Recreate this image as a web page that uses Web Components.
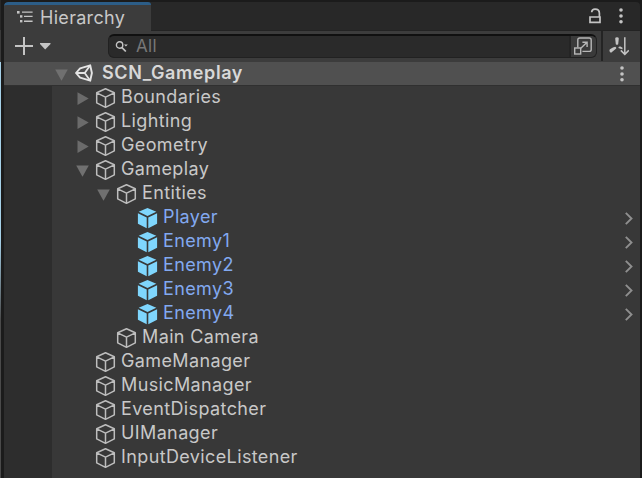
<!DOCTYPE html>
<html lang="en">
<head>
<meta charset="utf-8">
<title>Hierarchy</title>
<style>
html,body{margin:0;width:642px;height:478px;overflow:hidden;background:#1a1a1a}
</style>
</head>
<body>
<hierarchy-panel></hierarchy-panel>
<script>
const define = (name, html, setup) => {
  const t = document.createElement('template');
  t.innerHTML = html;
  customElements.define(name, class extends HTMLElement {
    connectedCallback() {
      if (this.shadowRoot) return;
      const root = this.attachShadow({mode: 'open'});
      root.append(t.content.cloneNode(true));
      if (setup) setup(this, root);
    }
  });
};

const ICONS = {
  list: [16, 14, '<g fill="#c4c4c4"><rect x="0" y="1" width="2.6" height="2.6"/><rect x="3" y="5.2" width="2.4" height="2.4"/><rect x="3" y="10" width="2.4" height="2.4"/><path d="M5 1.5h10.6v1.3H5zM7 5.8h8.6v1.3H7zM7 10.6h8.6v1.3H7z"/></g>'],
  plus: [18, 18, '<path d="M9 0v18M0 9h18" stroke="#c4c4c4" stroke-width="2"/>'],
  drop: [11, 7, '<path d="M0 0h10.5v1L5.2 6.6 0 1z" fill="#c4c4c4"/>'],
  search: [14, 12, '<circle cx="4.6" cy="4" r="3.2" fill="none" stroke="#c4c4c4" stroke-width="1.4"/><path d="M6.8 6.3l4 4.2" stroke="#c4c4c4" stroke-width="1.7"/><path d="M9 3.6h3.8L10.9 5.6z" fill="#c4c4c4"/>'],
  open: [18, 18, '<path d="M3.8 10.5V3q0-2 2-2h9.4q2 0 2 2v9.4q0 2-2 2H8.4M6.8 11.2l6-5.8M8.4 5.2h4.7v4.7" fill="none" stroke="#b8b8b8" stroke-width="1.4"/><rect x=".7" y="11" width="6" height="6" fill="none" stroke="#b8b8b8" stroke-width="1.4"/>'],
  lock: [12, 16, '<path d="M2.7 4.2V4Q3 1.1 6 1.1q4.4 0 4.4 4.2V9M1 9v5.4h10V9z" fill="none" stroke="#c4c4c4" stroke-width="1.7"/>'],
  dots: [4, 16, '<g fill="#c4c4c4"><circle cx="2" cy="2" r="1.8"/><circle cx="2" cy="8" r="1.8"/><circle cx="2" cy="13.8" r="1.8"/></g>'],
  fan: [20, 19, '<g fill="#c4c4c4"><path d="M6.2 1.5Q6.3.2 8 .2T9.8 1.5L9.2 7.3Q8 8.4 6.8 7.3zM.4 12.9Q1.1 11.4 6.2 9.7q1.5.3 1 1.9L2.1 15.7Q.4 15.4.4 12.9zM9.3 11q.4-1.8 2.2-1.4l2 1.2v1.5l-2-.5z"/></g><path d="M15.8.2v16.8M11.8 13.4l4 4 4-4" fill="none" stroke="#c4c4c4" stroke-width="1.5"/>'],
  unity: [18, 18, '<path d="M5.1 4.3L15.2 1.3l1.7 7.7-1.7 7.7-10.1-3L1 9z" fill="none" stroke="#e5e5e5" stroke-width="1.9" stroke-linejoin="round"/><path d="M1.5 9h8.2l5-7M9.7 9l5 7" fill="none" stroke="#e5e5e5" stroke-width="1.8"/>'],
  down: [13, 12, '<path d="M.2.4h12.6L6.5 11.8z" fill="#707070"/>'],
  right: [12, 13, '<path d="M.5.3v12.6L11.7 6.6z" fill="#6b6b6b"/>'],
  cube: [21, 22, '<path d="M10.5 1.8l8.8 4v10l-8.8 4.5-8.8-4.5v-10zM1.7 5.8l8.8 4.4 8.8-4.4M10.5 10.2v10.1" fill="none" stroke="#bdbdbd" stroke-width="1.5" stroke-linejoin="round"/>'],
  prefab: [21, 22, '<g fill="#7fd6fd"><path d="M10.5.9l8.8 3.9-8.8 4.1-8.8-4.1z"/><path d="M.9 6.3l8.8 4.1v10.8L.9 16.7zM20.1 6.3l-8.8 4.1v10.8l8.8-4.5z"/></g>'],
  chevron: [8, 13, '<path d="M.8.8l5.7 5.7-5.7 5.7" fill="none" stroke="#8f8f8f" stroke-width="1.9"/>']
};

define('ui-icon', '<style>:host{display:block;flex:none;line-height:0}svg{display:block}</style>', (el, root) => {
  const [w, h, body] = ICONS[el.getAttribute('name')];
  root.innerHTML += `<svg width="${w}" height="${h}" viewBox="0 0 ${w} ${h}">${body}</svg>`;
});

define('tab-bar', `<style>
:host{display:flex;height:29px;background:#282828;border-radius:4px 4px 0 0;overflow:hidden}
.tab{box-sizing:border-box;width:147px;border-top:3px solid #2c5d87;border-radius:4px 3px 0 0;background:#3c3c3c;display:flex;padding-left:13px;gap:7px}
.tab ui-icon{margin-top:5px}
.title{font-size:18px;letter-spacing:.3px;line-height:25px;color:#c8c8c8}
.rest{flex:1;border-bottom:1px solid #232323;display:flex;justify-content:flex-end;padding:6px 17px 0 0;gap:18px;height:22px}
</style><div class="tab"><ui-icon name="list"></ui-icon><span class="title"><slot></slot></span></div>
<div class="rest"><ui-icon name="lock"></ui-icon><ui-icon name="dots"></ui-icon></div>`);

define('search-field', `<style>
:host{display:flex;box-sizing:border-box;width:489px;height:24px;border:1px solid #212121;border-top:2px solid #101010;border-radius:6px;background:#2a2a2a;overflow:hidden}
.icon{margin:5px 0 0 6px}
.text{font-size:17px;letter-spacing:.3px;line-height:21px;color:#777;margin-left:7px;flex:1}
.open{border-left:2px solid #242424;background:#3a3a3a;padding:1px 0 0 3px;box-sizing:border-box;width:27px}
</style><ui-icon class="icon" name="search"></ui-icon><span class="text"><slot></slot></span><div class="open"><ui-icon name="open"></ui-icon></div>`);

define('tool-bar', `<style>
:host{display:flex;height:31px;background:#3c3c3c}
.plus{margin:6px 0 0 11px}.drop{margin:12px 0 0 7px}
search-field{margin:3px 0 0 57px}
.fan{width:39px;box-sizing:border-box;border-left:2px solid #242424;height:30px;margin-left:auto;padding:6px 0 0 6px}
</style><ui-icon class="plus" name="plus"></ui-icon><ui-icon class="drop" name="drop"></ui-icon><search-field>All</search-field><div class="fan"><ui-icon name="fan"></ui-icon></div>`);

define('scene-row', `<style>
:host{display:flex;box-sizing:border-box;height:24px;background:#505050;border-bottom:1px solid #303030;padding:0 16px 0 51px}
.u{margin:2px 0 0 7px}.d{margin-top:7px}
span{font-weight:600;font-size:18px;letter-spacing:.6px;line-height:22px;color:#d8d8d8;margin-left:9px;flex:1}
</style><ui-icon class="d" name="down"></ui-icon><ui-icon class="u" name="unity"></ui-icon><span><slot></slot></span><ui-icon name="dots" style="margin-top:4px"></ui-icon>`);

define('tree-item', `<style>
:host{display:flex;height:24px;color:#c8c8c8}
:host([prefab]){color:#82a9f0}
.fold{width:19px;flex:none;display:flex;align-items:center;padding-top:1px}
.cube{margin-top:1px}
.label{font-size:18px;letter-spacing:.38px;line-height:22px;margin-left:5px;flex:1;white-space:nowrap}
.chev{margin:6px 7px 0 0}
</style><div class="fold"></div><span class="label"><slot></slot></span>`, (el, root) => {
  const depth = +(el.getAttribute('depth') || 0);
  const fold = root.querySelector('.fold');
  fold.style.marginLeft = 24 + 21 * depth + 'px';
  const f = el.getAttribute('fold');
  if (f) fold.innerHTML = `<ui-icon name="${f}" style="margin-left:${f === 'right' ? 1 : 0}px"></ui-icon>`;
  const cube = document.createElement('ui-icon');
  cube.className = 'cube';
  cube.setAttribute('name', el.hasAttribute('prefab') ? 'prefab' : 'cube');
  fold.after(cube);
  if (el.hasAttribute('prefab')) {
    const c = document.createElement('ui-icon');
    c.className = 'chev';
    c.setAttribute('name', 'chevron');
    root.append(c);
  }
});

define('tree-view', `<style>:host{display:block;flex:1;box-sizing:border-box;border-left:48px solid #2d2d2d;background:#383838}</style><slot></slot>`);

define('hierarchy-panel', `<style>
:host{display:flex;flex-direction:column;box-sizing:border-box;width:642px;height:478px;padding:2px 2px 0 4px;background:linear-gradient(#282828 0 30px,#3a3a3a 30px 62px,#a5d0e8 62px 240px,#4a4a4a 320px) 0 0/1px 100% no-repeat #1b1b1b;font-family:Inter,"Liberation Sans",sans-serif}
</style>
<tab-bar>Hierarchy</tab-bar>
<tool-bar></tool-bar>
<scene-row>SCN_Gameplay</scene-row>
<tree-view>
<tree-item fold="right">Boundaries</tree-item>
<tree-item fold="right">Lighting</tree-item>
<tree-item fold="right">Geometry</tree-item>
<tree-item fold="down">Gameplay</tree-item>
<tree-item depth="1" fold="down">Entities</tree-item>
<tree-item depth="2" prefab>Player</tree-item>
<tree-item depth="2" prefab>Enemy1</tree-item>
<tree-item depth="2" prefab>Enemy2</tree-item>
<tree-item depth="2" prefab>Enemy3</tree-item>
<tree-item depth="2" prefab>Enemy4</tree-item>
<tree-item depth="1">Main Camera</tree-item>
<tree-item>GameManager</tree-item>
<tree-item>MusicManager</tree-item>
<tree-item>EventDispatcher</tree-item>
<tree-item>UIManager</tree-item>
<tree-item>InputDeviceListener</tree-item>
</tree-view>`);
</script>
</body>
</html>
